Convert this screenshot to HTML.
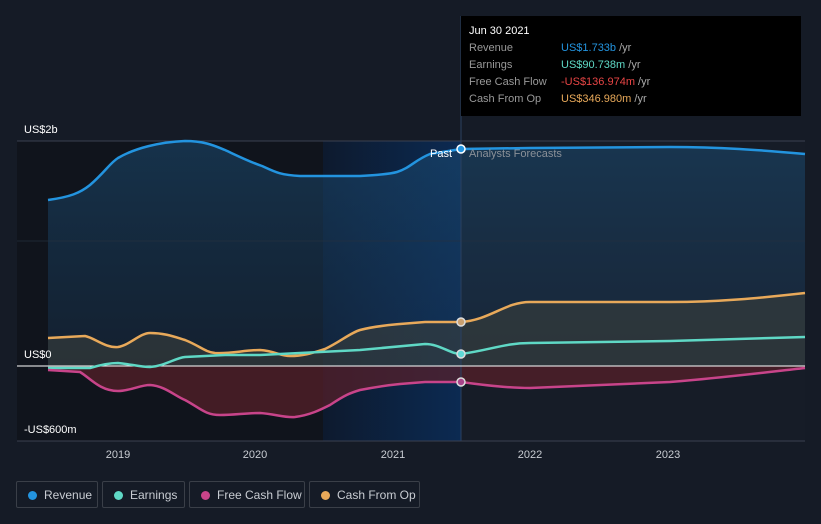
<!DOCTYPE html><html><head><style>
body{margin:0;width:821px;height:524px;background:#151b26;font-family:"Liberation Sans",sans-serif;overflow:hidden;position:relative}
.tt{position:absolute;left:461px;top:16px;width:340px;height:100px;background:#000}
.tt div{position:absolute;font-size:11px}
.leg{position:absolute;top:481px;height:27px;border:1px solid #3a3f48;border-radius:2px;color:#c8ccd2;font-size:12px;line-height:27px;box-sizing:border-box}
.leg i{position:absolute;left:11px;top:9px;width:9px;height:9px;border-radius:50%}
.leg span{position:absolute;left:27px}
</style></head><body>
<svg width="821" height="524" style="position:absolute;left:0;top:0">
<defs>
<linearGradient id="pg" x1="0" x2="1"><stop offset="0" stop-color="#0d1a2e"/><stop offset="1" stop-color="#0c2a52"/></linearGradient>
<linearGradient id="rv" x1="0" y1="0" x2="0" y2="1"><stop offset="0" stop-color="#1a4a70" stop-opacity=".7"/><stop offset="1" stop-color="#1a3a5a" stop-opacity=".4"/></linearGradient>
</defs>
<rect x="17" y="141" width="306" height="300" fill="#10141c"/>
<rect x="323" y="141" width="138" height="300" fill="url(#pg)"/>
<rect x="461" y="141" width="344" height="300" fill="#161c27"/>
<path d="M48,200 C70,197 80,193 90,185 C105,172 110,163 118,158 C135,148 160,142 185,141 C205,141 215,146 225,150 C240,157 250,162 262,166 C275,172 280,175 300,176 L360,176 C380,175 390,174 397,172 C410,168 415,160 430,154 L461,149 L530,148 L670,147 C720,147 760,150 805,154 L805,366 L48,366Z" fill="url(#rv)" opacity=".8"/>
<path d="M48,338 L85,336 C95,338 105,348 118,347 C130,345 140,333 150,333 C165,333 175,337 185,340 C200,346 205,352 215,353 C230,354 245,350 260,350 C275,351 280,356 290,356 C305,356 315,352 325,349 C340,342 350,333 360,330 C375,326 390,325 400,324 L425,322 L461,322 C490,320 505,302 530,302 L670,302 C720,302 760,298 805,293 L805,366 L48,366Z" fill="#3b3f3c" opacity=".6"/>
<path d="M48,370 L80,372 C90,378 100,391 118,391 C130,391 140,385 150,385 C165,386 175,396 185,400 C200,408 205,415 220,415 C235,415 245,413 260,413 C275,414 285,418 295,417 C310,415 320,410 330,405 C345,395 350,393 360,390 C375,387 390,385 400,384 L425,382 L461,382 C490,386 510,388 530,388 L670,382 C720,378 760,373 805,368 L805,366 L48,366Z" fill="#5a1f2a" opacity=".7"/>
<line x1="17" y1="141" x2="805" y2="141" stroke="#3a4050"/>
<line x1="17" y1="241" x2="805" y2="241" stroke="#253040" stroke-opacity=".7"/>
<line x1="17" y1="441" x2="805" y2="441" stroke="#3a4050"/>
<line x1="461" y1="16" x2="461" y2="441" stroke="#2a4060"/>
<line x1="17" y1="366" x2="805" y2="366" stroke="#fff"/>
<g fill="none" stroke-width="2.5">
<path d="M48,200 C70,197 80,193 90,185 C105,172 110,163 118,158 C135,148 160,142 185,141 C205,141 215,146 225,150 C240,157 250,162 262,166 C275,172 280,175 300,176 L360,176 C380,175 390,174 397,172 C410,168 415,160 430,154 L461,149 L530,148 L670,147 C720,147 760,150 805,154" stroke="#2394df"/>
<path d="M48,338 L85,336 C95,338 105,348 118,347 C130,345 140,333 150,333 C165,333 175,337 185,340 C200,346 205,352 215,353 C230,354 245,350 260,350 C275,351 280,356 290,356 C305,356 315,352 325,349 C340,342 350,333 360,330 C375,326 390,325 400,324 L425,322 L461,322 C490,320 505,302 530,302 L670,302 C720,302 760,298 805,293" stroke="#e8a95a"/>
<path d="M48,368 L90,368 C100,365 110,363 118,363 C130,364 140,367 150,367 C165,366 175,358 185,357 L225,355 L260,355 L300,353 L360,350 L425,344 C440,344 450,354 461,354 C490,350 505,343 530,343 L670,341 L805,337" stroke="#5fd8c5"/>
<path d="M48,370 L80,372 C90,378 100,391 118,391 C130,391 140,385 150,385 C165,386 175,396 185,400 C200,408 205,415 220,415 C235,415 245,413 260,413 C275,414 285,418 295,417 C310,415 320,410 330,405 C345,395 350,393 360,390 C375,387 390,385 400,384 L425,382 L461,382 C490,386 510,388 530,388 L670,382 C720,378 760,373 805,368" stroke="#c8448a"/>
</g>
<circle cx="461" cy="149" r="4" fill="#2394df" stroke="#fff" stroke-width="1.5"/>
<circle cx="461" cy="322" r="4" fill="#c9a070" stroke="#ddd" stroke-width="1.5"/>
<circle cx="461" cy="354" r="4" fill="#5fd8d5" stroke="#ddd" stroke-width="1.5"/>
<circle cx="461" cy="382" r="4" fill="#a8448a" stroke="#ddd" stroke-width="1.5"/>
<g fill="#fff" font-size="11">
<text x="24" y="133">US$2b</text><text x="24" y="358">US$0</text><text x="24" y="433">-US$600m</text>
<text x="430" y="157">Past</text>
<text x="469" y="157" fill="#8a9098">Analysts Forecasts</text>
<g fill="#c8ccd2" text-anchor="middle"><text x="118" y="458">2019</text><text x="255" y="458">2020</text><text x="393" y="458">2021</text><text x="530" y="458">2022</text><text x="668" y="458">2023</text></g>
</g>
<g stroke="#333"><line x1="469" y1="40" x2="793" y2="40"/><line x1="469" y1="57" x2="793" y2="57"/><line x1="469" y1="74" x2="793" y2="74"/><line x1="469" y1="91" x2="793" y2="91"/><line x1="469" y1="108" x2="793" y2="108"/></g>
</svg>
<div class="tt">
<div style="left:8px;top:9px;color:#fff">Jun 30 2021</div>
<div style="left:8px;top:26px;color:#999">Revenue</div><div style="left:100px;top:26px;color:#2394df">US$1.733b <span style="color:#aaa">/yr</span></div>
<div style="left:8px;top:43px;color:#999">Earnings</div><div style="left:100px;top:43px;color:#5fd8c5">US$90.738m <span style="color:#aaa">/yr</span></div>
<div style="left:8px;top:60px;color:#999">Free Cash Flow</div><div style="left:100px;top:60px;color:#e84545">-US$136.974m <span style="color:#aaa">/yr</span></div>
<div style="left:8px;top:77px;color:#999">Cash From Op</div><div style="left:100px;top:77px;color:#e8a95a">US$346.980m <span style="color:#aaa">/yr</span></div>
</div>
<div class="leg" style="left:16px;width:82px"><i style="background:#2394df"></i><span>Revenue</span></div>
<div class="leg" style="left:102px;width:83px"><i style="background:#5fd8c5"></i><span>Earnings</span></div>
<div class="leg" style="left:189px;width:116px"><i style="background:#c8448a"></i><span>Free Cash Flow</span></div>
<div class="leg" style="left:309px;width:111px"><i style="background:#e8a95a"></i><span>Cash From Op</span></div>
</body></html>
